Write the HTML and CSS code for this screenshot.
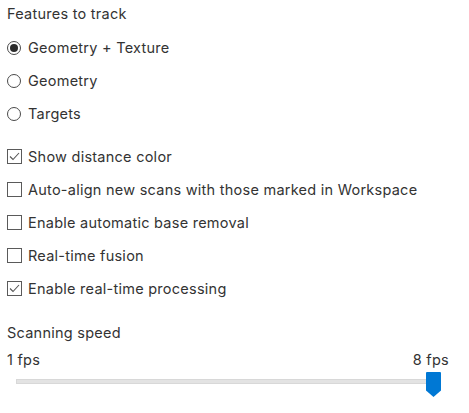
FILE: index.html
```html
<!DOCTYPE html>
<html>
<head>
<meta charset="utf-8">
<link rel="stylesheet" href="styles.css">
</head>
<body>
<div class="panel">
  <div class="heading">Features to track</div>
  <div class="group radios">
    <div class="row"><span class="radio checked"></span><span class="label">Geometry + Texture</span></div>
    <div class="row"><span class="radio"></span><span class="label">Geometry</span></div>
    <div class="row"><span class="radio"></span><span class="label">Targets</span></div>
  </div>
  <div class="group checks">
    <div class="row"><span class="check checked"><svg viewBox="0 0 15 15" width="15" height="15"><path d="M3 7.5 L6 10.5 L12 4" fill="none" stroke="#555" stroke-width="1.1"/></svg></span><span class="label">Show distance color</span></div>
    <div class="row"><span class="check"></span><span class="label">Auto-align new scans with those marked in Workspace</span></div>
    <div class="row"><span class="check"></span><span class="label">Enable automatic base removal</span></div>
    <div class="row"><span class="check"></span><span class="label">Real-time fusion</span></div>
    <div class="row"><span class="check checked"><svg viewBox="0 0 15 15" width="15" height="15"><path d="M3 7.5 L6 10.5 L12 4" fill="none" stroke="#555" stroke-width="1.1"/></svg></span><span class="label">Enable real-time processing</span></div>
  </div>
  <div class="heading speed">Scanning speed</div>
  <div class="scale"><span>1 fps</span><span>8 fps</span></div>
  <div class="slider">
    <div class="track"></div>
    <svg class="thumb" viewBox="0 0 15 25" width="15" height="25"><path d="M0 1 Q0 0 1 0 H14 Q15 0 15 1 V18.5 L7.5 25 L0 18.5 Z" fill="#0078d4"/></svg>
  </div>
</div>
</body>
</html>
```
FILE: styles.css
```css
html, body {
  margin: 0;
  padding: 0;
  background: #ffffff;
}
body {
  font-family: Inter, "Noto Sans", sans-serif;
  font-size: 14.5px;
  letter-spacing: 0.25px;
  color: #333333;
}
.panel {
  padding: 4px 20px 0 7px;
  display: flex;
  flex-direction: column;
}
.heading {
  line-height: 20px;
  height: 20px;
}
.radios {
  margin-top: 7px;
}
.checks {
  margin-top: 10px;
}
.row {
  display: flex;
  align-items: center;
  height: 33px;
  gap: 7px;
}
.label {
  line-height: 20px;
}
.radio {
  width: 12px;
  height: 12px;
  border: 1.2px solid #4a4a4a;
  border-radius: 50%;
  flex: none;
  display: flex;
  align-items: center;
  justify-content: center;
  margin-right: 0;
}
.radio.checked::after {
  content: "";
  width: 8px;
  height: 8px;
  border-radius: 50%;
  background: #2b2b2b;
}
.check {
  width: 13px;
  height: 13px;
  border: 1px solid #5a5a5a;
  flex: none;
  position: relative;
  margin-right: -1px;
}
.check svg {
  position: absolute;
  left: -1px;
  top: -1px;
}
.speed {
  margin-top: 18px;
}
.scale {
  margin-top: 7px;
  display: flex;
  justify-content: space-between;
  line-height: 20px;
  width: 442px;
}
.slider {
  position: relative;
  height: 30px;
  margin-left: 9px;
  width: 424px;
}
.track {
  position: absolute;
  left: 0;
  right: 0;
  top: 9px;
  height: 3px;
  background: #e3e3e3;
  border: 1px solid #d8d8d8;
}
.thumb {
  position: absolute;
  left: 410px;
  top: 2px;
}
```
